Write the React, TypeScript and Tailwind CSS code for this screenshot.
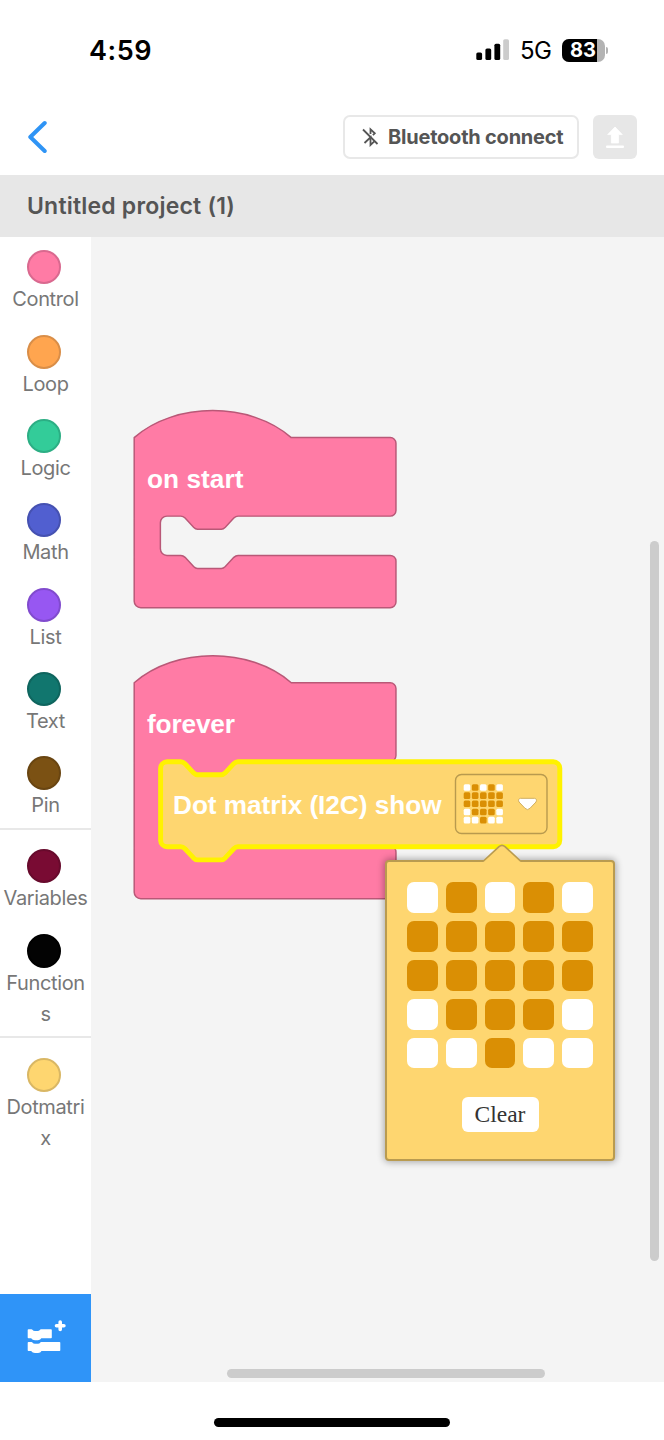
import React from "react";

type Category = { label: string; dot: string };

const GROUPS: Category[][] = [
  [
    { label: "Control", dot: "bg-[#ff7ba5] border-[#d9698f]" },
    { label: "Loop", dot: "bg-[#ffa54f] border-[#d98e48]" },
    { label: "Logic", dot: "bg-[#33cc99] border-[#2cae84]" },
    { label: "Math", dot: "bg-[#515fd0] border-[#4551b1]" },
    { label: "List", dot: "bg-[#9757f2] border-[#814bce]" },
    { label: "Text", dot: "bg-[#11766e] border-[#0f655e]" },
    { label: "Pin", dot: "bg-[#7b5113] border-[#694511]" },
  ],
  [
    { label: "Variables", dot: "bg-[#790b33] border-[#670a2c]" },
    { label: "Functions", dot: "bg-[#030303] border-[#000000]" },
  ],
  [{ label: "Dotmatrix", dot: "bg-[#fed670] border-[#d9b764]" }],
];

const HEART = ["01010", "11111", "11111", "01110", "00100"];

const NOTCH_RIGHT =
  "c1.4,0 2,0.6 2.6,1.2 l5.2,5.6 c0.6,0.6 1.2,1.2 2.4,1.2 h14.6 c1.2,0 1.8,-0.6 2.4,-1.2 l5.2,-5.6 c0.6,-0.6 1.2,-1.2 2.6,-1.2";
const NOTCH_LEFT =
  "c-1.4,0 -2,0.6 -2.6,1.2 l-5.2,5.6 c-0.6,0.6 -1.2,1.2 -2.4,1.2 h-14.6 c-1.2,0 -1.8,-0.6 -2.4,-1.2 l-5.2,-5.6 c-0.6,-0.6 -1.2,-1.2 -2.6,-1.2";

function hatBlock(inner: number) {
  return (
    `M0,0 c25,-22 71,-22 96,0 H156.5 a3.5,3.5 0 0 1 3.5,3.5 V44.5 a3.5,3.5 0 0 1 -3.5,3.5 H63.5 ` +
    NOTCH_LEFT +
    ` H20 a4,4 0 0 0 -4,4 v${inner - 8} a4,4 0 0 0 4,4 h8.5 ` +
    NOTCH_RIGHT +
    ` H156.5 a3.5,3.5 0 0 1 3.5,3.5 v25 a3.5,3.5 0 0 1 -3.5,3.5 H4 a4,4 0 0 1 -4,-4 Z`
  );
}

const STATEMENT =
  "M0,4 a4,4 0 0 1 4,-4 h8.3 " +
  NOTCH_RIGHT +
  " H240 a4,4 0 0 1 4,4 V48 a4,4 0 0 1 -4,4 H47.3 " +
  NOTCH_LEFT +
  " H4 a4,4 0 0 1 -4,-4 Z";

function StatusBar() {
  return (
    <div className="flex h-[100px] shrink-0 items-center justify-between pr-[56px] pl-[89px]">
      <span className="text-[27px] leading-none font-semibold tracking-[0.6px] text-black">4:59</span>
      <div className="flex items-center">
        <svg width="33" height="22" viewBox="0 0 33 22" className="mr-[11px]">
          <rect x="0.3" y="13.5" width="5.8" height="7.5" rx="1.6" />
          <rect x="9.4" y="9.4" width="5.8" height="11.6" rx="1.6" />
          <rect x="18.4" y="4.7" width="5.8" height="16.3" rx="1.6" />
          <rect x="27.2" y="0.2" width="5.8" height="20.8" rx="1.6" fill="#ccc" />
        </svg>
        <span className="mt-[2px] mr-[11px] w-[31px] text-[24px] leading-none tracking-[-0.7px] whitespace-nowrap text-black">5G</span>
        <div className="flex h-[23px] w-[43px] items-center overflow-hidden rounded-[7px] bg-[#b3b3b3]">
          <div className="flex h-full w-[35px] items-center justify-end bg-black pr-[1px]">
            <span className="text-[20px] leading-none font-bold text-white">83</span>
          </div>
        </div>
        <div className="ml-[1px] h-[7px] w-[2px] rounded-r-full bg-[#b3b3b3]" />
      </div>
    </div>
  );
}

function TopBar() {
  return (
    <div className="flex h-[74.5px] shrink-0 items-center justify-between pr-[27px] pl-[27px]">
      <svg width="20" height="34" viewBox="0 0 20 34" fill="none" className="mt-[-1px]">
        <path d="M17.7,3 L3.3,17 L17.7,31" stroke="#2f94f5" strokeWidth="4" strokeLinecap="round" strokeLinejoin="round" />
      </svg>
      <div className="mt-[-0.5px] flex gap-[14px]">
        <button className="flex h-[44px] w-[236px] items-center rounded-[7px] border-2 border-[#e8e8e8] bg-white pl-[17px]">
          <svg width="17" height="20" viewBox="0 0 17 20" fill="none" stroke="#555" strokeWidth="1.8" className="mr-[9px] shrink-0">
            <path d="M1,2.5 L15.5,17" />
            <path d="M8.5,7 V2.3 L12.8,6.3 L10.9,8.2" />
            <path d="M2.5,16 L8.5,10.3 V18 L12.6,14.2" />
          </svg>
          <span className="text-[20px] leading-none font-bold tracking-[-0.22px] whitespace-nowrap text-[#555]">
            Bluetooth connect
          </span>
        </button>
        <button className="flex h-[44px] w-[44px] items-center justify-center rounded-[6px] bg-[#e7e7e7]">
          <svg width="20" height="24" viewBox="0 0 20 24" fill="#fff">
            <path d="M10,2 L17.3,9.6 H13.6 V18 H6.4 V9.6 H2.7 Z" stroke="#fff" strokeWidth="0.8" strokeLinejoin="round" />
            <rect x="1" y="20.5" width="18" height="2.5" rx="1" />
          </svg>
        </button>
      </div>
    </div>
  );
}

function Sidebar() {
  return (
    <aside className="flex w-[91px] shrink-0 flex-col bg-white">
      {GROUPS.map((group, g) => (
        <div key={g} className={g > 0 ? "border-t-2 border-[#e8e8e8] pt-[6.6px]" : ""}>
          {group.map((item) => (
            <div key={item.label} className="flex flex-col items-center pt-[13.2px] pb-[6.2px]">
              <div className={`mr-[3px] size-[34px] rounded-full border-2 ${item.dot}`} />
              <div className="w-[85px] text-center text-[20px] leading-[31px] tracking-[-0.37px] break-all text-[#777]">
                {item.label}
              </div>
            </div>
          ))}
        </div>
      ))}
      <button className="mt-auto flex h-[88px] items-center justify-center bg-[#2f94f8]">
        <svg width="40" height="36" viewBox="0 0 40 36" fill="#fff" stroke="#fff" strokeLinejoin="round" className="mt-[-2px]">
          <path d="M2.5,11 H5.5 Q7,12.8 9,12.8 H12 Q14,12.8 15,11 H25 V18.5 H15 Q14,20.5 12,20.5 H9 Q7,20.5 5.5,18.5 H2.5 Z" strokeWidth="1.6" />
          <path d="M2.5,23.8 H5.5 Q7,25.6 9,25.6 H12 Q14,25.6 15,23.8 H33.5 V31.3 H15 Q14,33.3 12,33.3 H9 Q7,33.3 5.5,31.3 H2.5 Z" strokeWidth="1.6" />
          <path d="M34.2,3 V10.4 M30.5,6.7 H37.9" strokeWidth="3.6" strokeLinecap="round" />
        </svg>
      </button>
    </aside>
  );
}

function Blocks() {
  return (
    <svg width="573" height="1145" viewBox="91 237 573 1145" className="block">
      <g fill="#ff7ba5" stroke="#b95877" strokeWidth="0.9">
        <path transform="translate(134.2,437.6) scale(1.636)" d={hatBlock(24)} />
        <path transform="translate(134.2,682.8) scale(1.636)" d={hatBlock(52)} />
      </g>
      <path
        transform="translate(160.6,761.7) scale(1.636)"
        d={STATEMENT}
        fill="#fed670"
        stroke="#fff200"
        strokeWidth="3"
      />
      <g fill="#fff" fontFamily="'Liberation Sans', Arial, sans-serif" fontWeight="700" fontSize="26.2">
        <text x="147" y="487.5" textLength="96.5">on start</text>
        <text x="147" y="732.5" textLength="88">forever</text>
        <text x="173" y="814" textLength="268.5">Dot matrix (I2C) show</text>
      </g>
      <rect x="455.5" y="774.5" width="91.5" height="59" rx="6" fill="#fed670" stroke="#b89a4e" strokeWidth="1.4" />
      {HEART.map((row, r) =>
        row.split("").map((cell, c) => (
          <rect
            key={`${r}-${c}`}
            x={463.7 + c * 8.15}
            y={784.2 + r * 8.15}
            width="6.6"
            height="6.6"
            rx="1.5"
            fill={cell === "1" ? "#da8f04" : "#fff"}
          />
        )),
      )}
      <path
        d="M520.5,798.3 H534.5 Q537.5,799 536,802 L530,808.3 Q527.5,811 525,808.3 L519,802 Q517.5,799 520.5,798.3 Z"
        fill="#fff"
        stroke="#cfae60"
        strokeWidth="1"
      />
    </svg>
  );
}

function MatrixEditor() {
  return (
    <div className="absolute top-[623px] left-[294px] flex h-[301px] w-[230px] flex-col items-center rounded-[4px] border-2 border-[#b99b50] bg-[#fed670] pt-[20px] shadow-[0_0_7px_1px_rgba(0,0,0,0.32)]">
      <svg width="40" height="20" viewBox="0 0 40 20" className="absolute top-[-18.5px] left-[95px]">
        <path d="M1,17.5 L17,2.6 Q20,0 23,2.6 L39,17.5 V20 H1 Z" fill="#fed670" />
        <path d="M1,17.5 L17,2.6 Q20,0 23,2.6 L39,17.5" fill="none" stroke="#b99b50" strokeWidth="1.7" />
      </svg>
      <div className="grid grid-cols-5 gap-[8px]">
        {HEART.join("")
          .split("")
          .map((cell, i) => (
            <div
              key={i}
              className={`size-[30.9px] rounded-[7px] ${cell === "1" ? "bg-[#da8f04]" : "bg-white"}`}
            />
          ))}
      </div>
      <button className="mt-[28.5px] flex h-[35.5px] w-[77px] items-center justify-center rounded-[6px] bg-white font-['Liberation_Serif',serif] text-[23.5px] leading-none text-[#333]">
        Clear
      </button>
    </div>
  );
}

export default function App() {
  return (
    <div className="flex h-[1440px] w-[664px] flex-col overflow-hidden bg-white font-['Inter',sans-serif]">
      <StatusBar />
      <TopBar />
      <div className="flex h-[62.5px] shrink-0 items-center bg-[#e7e7e7] pl-[27px]">
        <h1 className="pt-[1px] text-[23px] leading-none font-semibold tracking-[0.2px] text-[#555]">Untitled project (1)</h1>
      </div>
      <div className="flex h-[1145px] shrink-0">
        <Sidebar />
        <main className="relative w-[573px] shrink-0 bg-[#f4f4f4]">
          <Blocks />
          <MatrixEditor />
          <div className="absolute top-[304px] left-[559px] h-[720px] w-[9px] rounded-full bg-[#ccc]" />
          <div className="absolute top-[1131.5px] left-[136px] h-[9px] w-[318px] rounded-full bg-[#ccc]" />
        </main>
      </div>
      <div className="flex grow items-start justify-center pt-[35.5px]">
        <div className="h-[9px] w-[236px] rounded-full bg-black" />
      </div>
    </div>
  );
}
